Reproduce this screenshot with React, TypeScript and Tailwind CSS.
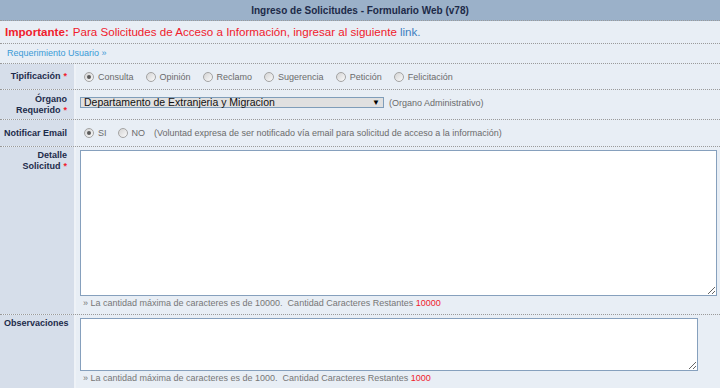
import React from "react";

const FONT = "font-['Liberation_Sans',Arial,sans-serif]";

function Radio({ checked, label }: { checked?: boolean; label: string }) {
  return (
    <span className="flex items-center">
      <span className="ml-[4px] mr-[4px] flex h-[10px] w-[10px] items-center justify-center rounded-full border border-[#a3a3a3] bg-gradient-to-br from-[#d4d4d4] to-[#fafafa]">
        {checked && <span className="h-[4px] w-[4px] rounded-full bg-[#5a5a5a]" />}
      </span>
      <span className="pt-[2px] text-[9px] text-[#6b6b6b]">{label}</span>
    </span>
  );
}

function Label({ lines, required }: { lines: string[]; required?: boolean }) {
  return (
    <div className="text-right text-[9px] font-bold leading-[11px] text-[#1d2b4a]">
      {lines.map((l, i) => (
        <div key={l}>
          {l}
          {required && i === lines.length - 1 ? (
            <span className="ml-[3px] text-[#f0202c]">*</span>
          ) : null}
        </div>
      ))}
    </div>
  );
}

function Row({
  label,
  children,
  className,
  labelTop,
}: {
  label: React.ReactNode;
  children: React.ReactNode;
  className: string;
  labelTop?: boolean;
}) {
  return (
    <div className={`flex border-b border-dotted border-[#9a9a9a] ${className}`}>
      <div
        className={`flex w-[74px] shrink-0 bg-[#d6deea] pr-[7px] ${
          labelTop ? "items-start justify-end pt-[3px]" : "items-center justify-end"
        }`}
      >
        {label}
      </div>
      <div className="w-[2px] shrink-0 bg-[#eef2f7]" />
      <div className="flex-1 bg-[#e8eef5] pl-[4px]">{children}</div>
    </div>
  );
}

export default function App() {
  return (
    <div className={`h-[388px] w-[720px] overflow-hidden bg-[#e8eef5] ${FONT}`}>
      {/* Title */}
      <div className="flex h-[21px] items-center justify-center border-b border-dotted border-[#9a9a9a] bg-[#9bb1c9] text-[10px] font-bold text-[#1d2a48]">
        Ingreso de Solicitudes - Formulario Web (v78)
      </div>

      <div className="flex h-[23px] items-center border-b border-dotted border-[#9a9a9a] pl-[5px] text-[11.6px] text-[#f0202c]">
        <span className="font-bold">Importante:</span>
        <span className="ml-[4px]">Para Solicitudes de Acceso a Información, ingresar al siguiente</span>
        <span className="ml-[3px] text-[#3d7fbf]">link.</span>
      </div>

      <div className="flex h-[20px] items-center border-b border-dotted border-[#9a9a9a] pl-[7px] text-[9px] text-[#3a9ad6]">
        Requerimiento Usuario »
      </div>

      <Row className="h-[26px]" label={<Label lines={["Tipificación"]} required />}>
        <div className="flex h-full items-center gap-[8px]">
          <Radio checked label="Consulta" />
          <Radio label="Opinión" />
          <Radio label="Reclamo" />
          <Radio label="Sugerencia" />
          <Radio label="Petición" />
          <Radio label="Felicitación" />
        </div>
      </Row>

      <Row className="h-[30px]" label={<Label lines={["Órgano", "Requerido"]} required />}>
        <div className="flex h-full items-start pt-[7px]">
          <div className="flex h-[11px] w-[304px] items-center justify-between border border-[#7f9db9] bg-[#e0e0e0] pl-[3px] pr-[3px] text-[10.5px] leading-none text-[#111]">
            <span>Departamento de Extranjeria y Migracion</span>
            <span className="text-[8px] text-black">▼</span>
          </div>
          <span className="ml-[5px] text-[9px] leading-[12px] text-[#6b6b6b]">(Organo Administrativo)</span>
        </div>
      </Row>

      <Row className="h-[27px]" label={<Label lines={["Notificar Email"]} />}>
        <div className="flex h-full items-center">
          <Radio checked label="SI" />
          <span className="ml-[7px]" />
          <Radio label="NO" />
          <span className="ml-[9px] pt-[2px] text-[9px] text-[#6b6b6b]">
            (Voluntad expresa de ser notificado vía email para solicitud de acceso a la información)
          </span>
        </div>
      </Row>

      <Row className="h-[168px]" labelTop label={<Label lines={["Detalle", "Solicitud"]} required />}>
        <div className="flex flex-col pt-[3px]">
          <textarea
            readOnly
            className="block h-[146px] w-[637px] border border-[#86a0bd] bg-white outline-none"
          />
          <div className="mt-[1px] pl-[3px] text-[9px] leading-[12px] text-[#777]">
            » La cantidad máxima de caracteres es de 10000.&nbsp; Cantidad Caracteres Restantes{" "}
            <span className="text-[#f0202c]">10000</span>
          </div>
        </div>
      </Row>

      <div className="flex h-[74px]">
        <div className="flex w-[74px] shrink-0 items-start justify-start bg-[#d6deea] pl-[4px] pt-[3px]">
          <Label lines={["Observaciones"]} />
        </div>
        <div className="w-[2px] shrink-0 bg-[#eef2f7]" />
        <div className="flex flex-1 flex-col bg-[#e8eef5] pl-[4px] pt-[3px]">
          <textarea
            readOnly
            className="block h-[53px] w-[618px] border border-[#86a0bd] bg-white outline-none"
          />
          <div className="mt-[1px] pl-[3px] text-[9px] leading-[12px] text-[#777]">
            » La cantidad máxima de caracteres es de 1000.&nbsp; Cantidad Caracteres Restantes{" "}
            <span className="text-[#f0202c]">1000</span>
          </div>
        </div>
      </div>
    </div>
  );
}
